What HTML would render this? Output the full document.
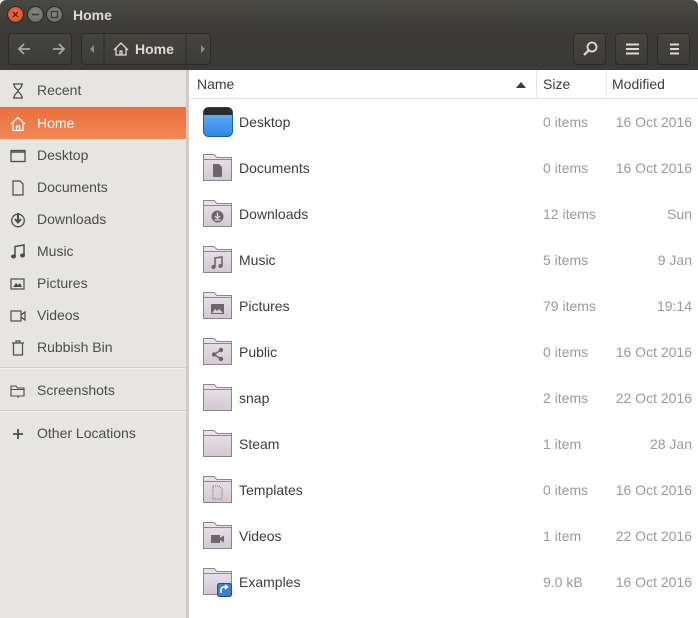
<!DOCTYPE html>
<html><head><meta charset="utf-8"><style>
*{margin:0;padding:0;box-sizing:border-box}
body{width:698px;height:618px;overflow:hidden;font-family:"Liberation Sans","DejaVu Sans",sans-serif;font-size:14px;background:#fff;position:relative}
.top{position:absolute;left:0;top:0;width:698px;height:70px;background:linear-gradient(#4a4944,#3c3b37 40%,#3a3935);border-radius:6px 6px 0 0}
.title{position:absolute;left:73px;top:7px;color:#dfdbd2;font-weight:bold;font-size:14px}
.wb{position:absolute;top:6px;width:17px;height:17px;border-radius:50%}
.grp{position:absolute;top:33px;height:32px;border:1px solid #2d2c29;border-radius:4px;background:linear-gradient(#45443f,#3d3c38)}
.side{position:absolute;left:0;top:70px;height:548px;background:#e7e5e2;border-right:3px solid #cfccc8;width:189px}
.si{position:absolute;left:0;width:186px;height:32px;color:#4c4c4c;font-size:14px}
.si span{position:absolute;left:37px;top:8px}
.si svg{position:absolute;left:10px;top:9px}
.sel{background:linear-gradient(#e9703d,#f48755);color:#fff}
.sep{position:absolute;left:0;width:186px;height:2px;border-top:1px solid #cfccc8;border-bottom:1px solid #f3f2f0}
.hdr{position:absolute;left:189px;top:70px;width:509px;height:29px;border-bottom:1px solid #e3e3e3;color:#3c3c3c}
.hdr span{position:absolute;top:6px}
.row{position:absolute;left:189px;width:509px;height:46px;color:#3c3c3c}
.row .n{position:absolute;left:50px;top:15px}
.row .s{position:absolute;left:354px;top:15px;color:#9a9a9a}
.row .m{position:absolute;right:6px;top:15px;color:#9a9a9a}
.row svg{position:absolute;left:13px;top:8px}
</style></head><body>
<div class="top">
<div class="wb" style="left:7px;background:radial-gradient(circle at 50% 40%,#f2743f,#d34a1a);border:1px solid #2a2926"><svg width="15" height="15" style="position:absolute;left:0;top:0"><path d="M5 5L10 10M10 5L5 10" stroke="#4a2012" stroke-width="1.4"/></svg></div>
<div class="wb" style="left:27px;background:radial-gradient(circle at 50% 40%,#8a8883,#66645f);border:1px solid #2a2926"><svg width="15" height="15" style="position:absolute;left:0;top:0"><path d="M4 7.5H11" stroke="#3a3935" stroke-width="1.6"/></svg></div>
<div class="wb" style="left:46px;background:radial-gradient(circle at 50% 40%,#8a8883,#66645f);border:1px solid #2a2926"><svg width="15" height="15" style="position:absolute;left:0;top:0"><rect x="4.5" y="4.5" width="6" height="6" fill="none" stroke="#3a3935" stroke-width="1.3"/></svg></div>
<div class="title">Home</div>
<div class="grp" style="left:8px;width:64px"><svg width="64" height="30"><path d="M21 15H10M15 10L10 15L15 20M44 15H55M50 10L55 15L50 20" stroke="#a9a7a2" stroke-width="1.8" fill="none"/></svg></div>
<div class="grp" style="left:81px;width:130px">
<svg width="130" height="30" style="position:absolute;left:0;top:0"><path d="M12 11V19L8 15Z M119 11V19L123 15Z" fill="#8f8d88"/><path d="M22 0V30M104 0V30" stroke="#2d2c29"/><path d="M32 16L39 9L46 16M34 14V21H44V14M38 21V17H40V21" stroke="#dfdbd2" stroke-width="1.3" fill="none"/></svg>
<span style="position:absolute;left:53px;top:7px;color:#dfdbd2;font-weight:bold">Home</span></div>
<div class="grp" style="left:573px;width:33px"><svg width="33" height="30"><circle cx="18" cy="13" r="4.5" stroke="#dfdbd2" stroke-width="1.8" fill="none"/><path d="M15 16L10 21" stroke="#dfdbd2" stroke-width="2.2"/></svg></div>
<div class="grp" style="left:615px;width:33px"><svg width="33" height="30"><path d="M10 10.5H23M10 15H23M10 19.5H23" stroke="#dfdbd2" stroke-width="2"/></svg></div>
<div class="grp" style="left:657px;width:33px"><svg width="33" height="30"><path d="M12 10.5H21M12 15H21M12 19.5H21" stroke="#dfdbd2" stroke-width="2"/></svg></div>
</div>

<div class="side">
<div class="si" style="top:4px"><svg width="16" height="16"><path d="M3 1H13M3 15H13M4 1C4 6 8 6 8 8C8 10 4 10 4 15M12 1C12 6 8 6 8 8C8 10 12 10 12 15" stroke="#4c4c4c" stroke-width="1.3" fill="none"/></svg><span>Recent</span></div>
<div class="si sel" style="top:37px;height:32px"><svg width="16" height="16"><path d="M1 8L8 1.5L15 8M3 6.5V14.5H13V6.5M6.5 14.5V10H9.5V14.5" stroke="#fff" stroke-width="1.3" fill="none"/></svg><span>Home</span></div>
<div class="si" style="top:69px"><svg width="16" height="16"><rect x="1" y="2.5" width="14" height="11" stroke="#4c4c4c" stroke-width="1.3" fill="none"/><path d="M1 4H15" stroke="#4c4c4c" stroke-width="1.5"/></svg><span>Desktop</span></div>
<div class="si" style="top:101px"><svg width="16" height="16"><path d="M3 1H10L13 4V15H3Z" stroke="#4c4c4c" stroke-width="1.2" fill="none"/></svg><span>Documents</span></div>
<div class="si" style="top:133px"><svg width="16" height="16"><circle cx="8" cy="8.5" r="6.3" stroke="#4c4c4c" stroke-width="1.3" fill="none"/><path d="M8 1V10M5 7L8 10.5L11 7" stroke="#4c4c4c" stroke-width="2" fill="none"/></svg><span>Downloads</span></div>
<div class="si" style="top:165px"><svg width="16" height="16"><path d="M5 12V2.5L14 1V11" stroke="#4c4c4c" stroke-width="1.5" fill="none"/><ellipse cx="3.5" cy="12.5" rx="2.5" ry="2" fill="#4c4c4c"/><ellipse cx="12.5" cy="11.5" rx="2.5" ry="2" fill="#4c4c4c"/></svg><span>Music</span></div>
<div class="si" style="top:197px"><svg width="16" height="16"><rect x="1" y="3" width="13" height="10" stroke="#4c4c4c" stroke-width="1.2" fill="none"/><path d="M3 11L6 7L8 9L10 7L12 11Z" fill="#4c4c4c"/></svg><span>Pictures</span></div>
<div class="si" style="top:229px"><svg width="16" height="16"><rect x="1" y="3" width="10" height="10" stroke="#4c4c4c" stroke-width="1.2" fill="none"/><path d="M11 7L15 4V12L11 9" stroke="#4c4c4c" stroke-width="1.2" fill="none"/></svg><span>Videos</span></div>
<div class="si" style="top:261px"><svg width="16" height="16"><path d="M2 3H14M6 3V1H10V3M3.5 3.5V15H12.5V3.5" stroke="#4c4c4c" stroke-width="1.2" fill="none"/></svg><span>Rubbish Bin</span></div>
<div class="sep" style="top:297px"></div>
<div class="si" style="top:304px"><svg width="16" height="16"><path d="M1 3H6L7.5 5H14V13H1Z M8 13V15" stroke="#4c4c4c" stroke-width="1.1" fill="none"/><path d="M1 6.5H14" stroke="#4c4c4c" stroke-width="1"/></svg><span>Screenshots</span></div>
<div class="sep" style="top:340px"></div>
<div class="si" style="top:347px"><svg width="16" height="16"><path d="M8 3V13M3 8H13" stroke="#4c4c4c" stroke-width="1.8"/></svg><span>Other Locations</span></div>
</div>

<div class="hdr"><span style="left:8px">Name</span><svg width="10" height="6" style="position:absolute;left:327px;top:12px"><path d="M0 6L5 0L10 6Z" fill="#3c3c3c"/></svg><div style="position:absolute;left:347px;top:0;height:29px;border-left:1px solid #e3e3e3"></div><span style="left:354px">Size</span><div style="position:absolute;left:417px;top:0;height:29px;border-left:1px solid #e3e3e3"></div><span style="left:423px">Modified</span></div>

<svg width="0" height="0" style="position:absolute"><defs>
<linearGradient id="fg" x1="0" y1="0" x2="0" y2="1"><stop offset="0" stop-color="#e6dee6"/><stop offset="1" stop-color="#d4c8d3"/></linearGradient>
<g id="fold"><path d="M1.5 1.5H12L15 4.5H29.5V27.5H1.5Z" fill="#e9e3e9" stroke="#8d858c"/><path d="M1.5 6.5H29.5V27.5H1.5Z" fill="url(#fg)" stroke="#8d858c"/></g>
</defs></svg>

<div class="row" style="top:99px"><svg width="32" height="30"><defs><linearGradient id="dg" x1="0" y1="0" x2="0" y2="1"><stop offset="0" stop-color="#6cb8f2"/><stop offset="1" stop-color="#2e86e6"/></linearGradient></defs><rect x="1.5" y="0.5" width="29" height="29" rx="5" fill="url(#dg)" stroke="#1d5fa8"/><path d="M1.5 5.5V5A5 5 0 0 1 6.5 0.5H25.5A5 5 0 0 1 30.5 5.5V8H1.5Z" fill="#2c2c2c"/></svg><span class="n">Desktop</span><span class="s">0 items</span><span class="m">16 Oct 2016</span></div>
<div class="row" style="top:145px"><svg width="32" height="30"><use href="#fold"/><path d="M11 11H17L20 14V24H11Z" fill="#6e666d"/></svg><span class="n">Documents</span><span class="s">0 items</span><span class="m">16 Oct 2016</span></div>
<div class="row" style="top:191px"><svg width="32" height="30"><use href="#fold"/><circle cx="15.5" cy="17.5" r="6" fill="#6e666d"/><path d="M15.5 13.5V19M13 17L15.5 19.5L18 17M12.5 21H18.5" stroke="#e3dbe3" stroke-width="1.3" fill="none"/></svg><span class="n">Downloads</span><span class="s">12 items</span><span class="m">Sun</span></div>
<div class="row" style="top:237px"><svg width="32" height="30"><use href="#fold"/><path d="M13 22V13L20 12V21" stroke="#6e666d" stroke-width="1.6" fill="none"/><circle cx="11.5" cy="22" r="2" fill="#6e666d"/><circle cx="18.5" cy="21" r="2" fill="#6e666d"/></svg><span class="n">Music</span><span class="s">5 items</span><span class="m">9 Jan</span></div>
<div class="row" style="top:283px"><svg width="32" height="30"><use href="#fold"/><rect x="9" y="13" width="13" height="10" fill="#6e666d"/><path d="M10 22L13 18L15 20L17 18L21 22Z" fill="#d8d0d8"/></svg><span class="n">Pictures</span><span class="s">79 items</span><span class="m">19:14</span></div>
<div class="row" style="top:329px"><svg width="32" height="30"><use href="#fold"/><path d="M19 13L12 17.5L19 22" stroke="#6e666d" stroke-width="1.5" fill="none"/><circle cx="19" cy="13" r="2.2" fill="#6e666d"/><circle cx="12" cy="17.5" r="2.2" fill="#6e666d"/><circle cx="19" cy="22" r="2.2" fill="#6e666d"/></svg><span class="n">Public</span><span class="s">0 items</span><span class="m">16 Oct 2016</span></div>
<div class="row" style="top:375px"><svg width="32" height="30"><use href="#fold"/></svg><span class="n">snap</span><span class="s">2 items</span><span class="m">22 Oct 2016</span></div>
<div class="row" style="top:421px"><svg width="32" height="30"><use href="#fold"/></svg><span class="n">Steam</span><span class="s">1 item</span><span class="m">28 Jan</span></div>
<div class="row" style="top:467px"><svg width="32" height="30"><use href="#fold"/><path d="M11 11H17L20 14V24H11Z" fill="none" stroke="#6e666d" stroke-dasharray="1 1"/></svg><span class="n">Templates</span><span class="s">0 items</span><span class="m">16 Oct 2016</span></div>
<div class="row" style="top:513px"><svg width="32" height="30"><use href="#fold"/><rect x="9" y="14" width="9" height="8" fill="#6e666d"/><path d="M18 17L22 14.5V21.5L18 19Z" fill="#6e666d"/></svg><span class="n">Videos</span><span class="s">1 item</span><span class="m">22 Oct 2016</span></div>
<div class="row" style="top:559px"><svg width="32" height="30"><use href="#fold"/><rect x="15.5" y="16.5" width="14" height="13" rx="2" fill="#3a7fd0" stroke="#1b4f8f"/><path d="M19 26V23C19 21 20 20 22 20H25M23 18L25.5 20L23 22" stroke="#fff" stroke-width="1.6" fill="none"/></svg><span class="n">Examples</span><span class="s">9.0 kB</span><span class="m">16 Oct 2016</span></div>
</body></html>
